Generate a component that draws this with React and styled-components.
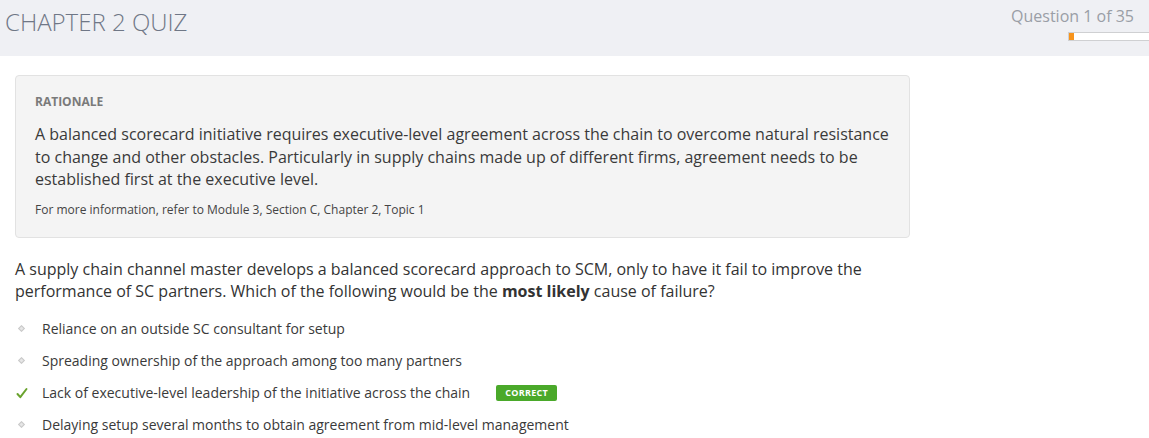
import React from "react";
import styled, { createGlobalStyle } from "styled-components";

const GlobalStyle = createGlobalStyle`
  body {
    margin: 0;
    background: #ffffff;
    font-family: "Open Sans", "Liberation Sans", sans-serif;
  }
`;

const options = [
  { text: "Reliance on an outside SC consultant for setup" },
  { text: "Spreading ownership of the approach among too many partners" },
  { text: "Lack of executive-level leadership of the initiative across the chain", correct: true },
  { text: "Delaying setup several months to obtain agreement from mid-level management" },
];

function App() {
  const current = 1;
  const total = 35;
  return (
    <Page>
      <GlobalStyle />
      <Header>
        <Title>CHAPTER 2 QUIZ</Title>
        <Progress>
          <Counter>Question {current} of {total}</Counter>
          <Track>
            <Fill style={{ width: `${Math.max(5, (current / total) * 80)}px` }} />
          </Track>
        </Progress>
      </Header>
      <Body>
        <Rationale>
          <Label>RATIONALE</Label>
          <RationaleText>
            A balanced scorecard initiative requires executive-level agreement across the chain to overcome natural resistance
            to change and other obstacles. Particularly in supply chains made up of different firms, agreement needs to be
            established first at the executive level.
          </RationaleText>
          <Reference>For more information, refer to Module 3, Section C, Chapter 2, Topic 1</Reference>
        </Rationale>
        <Question>
          A supply chain channel master develops a balanced scorecard approach to SCM, only to have it fail to improve the
          performance of SC partners. Which of the following would be the <strong>most likely</strong> cause of failure?
        </Question>
        <Options>
          {options.map((o) => (
            <Option key={o.text}>
              <Marker>
                {o.correct ? (
                  <svg width="12" height="12" viewBox="0 0 12 12">
                    <path d="M1.5 7 L4.3 10.2 L10.5 2" fill="none" stroke="#6aa32e" strokeWidth="2" strokeLinecap="round" strokeLinejoin="round" />
                  </svg>
                ) : (
                  <Diamond />
                )}
              </Marker>
              <OptionText>{o.text}</OptionText>
              {o.correct && <Badge>CORRECT</Badge>}
            </Option>
          ))}
        </Options>
      </Body>
    </Page>
  );
}

export default App;

const Page = styled.div`
  width: 1149px;
  min-height: 438px;
`;

const Header = styled.div`
  display: flex;
  justify-content: space-between;
  height: 56px;
  background: #eff0f4;
`;

const Title = styled.h1`
  margin: 6px 0 0 5px;
  font-size: 24px;
  font-weight: 300;
  color: #6f7786;
  line-height: 32px;
`;

const Progress = styled.div`
  display: flex;
  flex-direction: column;
  align-items: flex-end;
  padding-top: 5px;
`;

const Counter = styled.div`
  font-size: 16px;
  color: #9a9ea6;
  line-height: 22px;
  margin-right: 15px;
`;

const Track = styled.div`
  margin-top: 5px;
  width: 80px;
  height: 7px;
  background: #ffffff;
  border: 1px solid #cfd0d2;
  border-right: none;
  box-sizing: content-box;
  display: flex;
`;

const Fill = styled.div`
  background: #f7941d;
  height: 100%;
`;

const Body = styled.div`
  padding: 19px 15px 0 15px;
`;

const Rationale = styled.div`
  width: 895px;
  box-sizing: border-box;
  background: #f4f4f4;
  border: 1px solid #e2e2e2;
  border-radius: 4px;
  padding: 18px 19px 19px 19px;
`;

const Label = styled.div`
  font-size: 12px;
  font-weight: 700;
  color: #7a7a7a;
  line-height: 16px;
`;

const RationaleText = styled.p`
  margin: 13px 0 0 0;
  font-size: 16px;
  line-height: 22.5px;
  color: #3a3a3a;
`;

const Reference = styled.p`
  margin: 11px 0 0 0;
  font-size: 12px;
  line-height: 16px;
  color: #444;
`;

const Question = styled.p`
  margin: 20px 0 0 0;
  font-size: 16px;
  line-height: 22px;
  color: #333;
  width: 880px;

  strong {
    font-weight: 700;
  }
`;

const Options = styled.ul`
  list-style: none;
  margin: 11px 0 0 0;
  padding: 0;
`;

const Option = styled.li`
  display: flex;
  align-items: center;
  height: 32px;
`;

const Marker = styled.span`
  width: 26px;
  display: flex;
  align-items: center;
  padding-left: 1px;
`;

const Diamond = styled.span`
  display: block;
  width: 3px;
  height: 3px;
  margin-left: 3px;
  background: #e6e6e6;
  border: 1px solid #c9c9c9;
  transform: rotate(45deg);
`;

const OptionText = styled.span`
  font-size: 14px;
  color: #3a3a3a;
`;

const Badge = styled.span`
  margin-left: 26px;
  background: #4aa92a;
  color: #ffffff;
  font-size: 9px;
  font-weight: 700;
  letter-spacing: 0.3px;
  padding: 2px 9px;
  border-radius: 2px;
  line-height: 12px;
`;
